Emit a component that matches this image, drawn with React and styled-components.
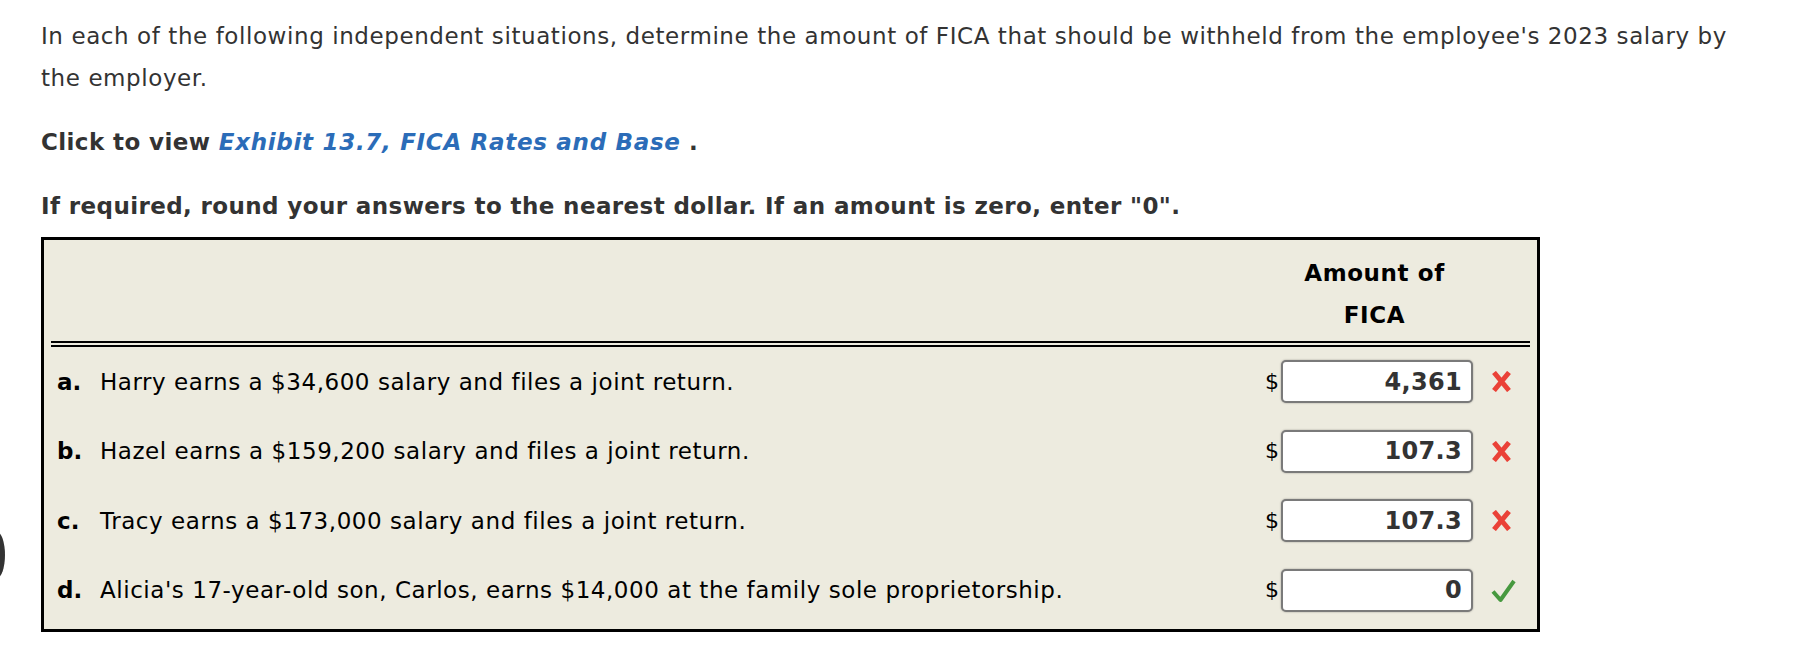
import styled, { createGlobalStyle } from "styled-components";

const GlobalStyle = createGlobalStyle`
  html, body {
    margin: 0;
    padding: 0;
    background: #ffffff;
  }
  body {
    font-family: "DejaVu Sans", Verdana, sans-serif;
  }
`;

const Page = styled.div`
  position: relative;
  padding: 15px 0 40px 41px;
  font-size: 23px;
  letter-spacing: 0.55px;
  line-height: 42px;
  color: #333333;
`;

const Paragraph = styled.p`
  margin: 0 0 22px 0;
  width: ${(p) => p.$width || "auto"};
  font-weight: ${(p) => (p.$bold ? 700 : 400)};
  letter-spacing: ${(p) => (p.$bold ? "0.4px" : "0.58px")};
`;

const ExhibitLink = styled.a`
  color: #2b6cb8;
  font-style: italic;
  font-weight: 700;
  letter-spacing: 0.7px;
  text-decoration: none;
  cursor: pointer;
`;

const Table = styled.div`
  width: 1499px;
  box-sizing: border-box;
  margin-top: -12px;
  border: 3px solid #000000;
  background: #edebdf;
  padding: 0 7px 4px 7px;
  color: #000000;
`;

const Grid = styled.div`
  display: grid;
  grid-template-columns: 1fr 227px 42px;
`;

const HeaderRow = styled.div`
  grid-column: 1 / -1;
  display: grid;
  grid-template-columns: 1fr 227px 42px;
  padding: 12px 0 5px 0;
  border-bottom: 6px double #000000;
`;

const HeaderCell = styled.div`
  grid-column: 2;
  text-align: center;
  font-weight: 700;
  letter-spacing: 0.6px;
  line-height: 42px;
`;

const Row = styled.div`
  grid-column: 1 / -1;
  display: grid;
  grid-template-columns: 1fr 227px 42px;
  align-items: center;
  height: 69.5px;
`;

const Situation = styled.div`
  display: flex;
  align-items: center;
  padding-left: 6px;
  line-height: 30px;
`;

const Letter = styled.span`
  font-weight: 700;
  width: 43px;
  flex-shrink: 0;
  letter-spacing: 0;
`;

const AmountCell = styled.div`
  display: flex;
  align-items: center;
  justify-content: flex-end;
  padding-right: 15px;
`;

const Dollar = styled.span`
  font-size: 22px;
  letter-spacing: 0;
  margin-right: 2px;
  line-height: 30px;
`;

const AmountBox = styled.div`
  width: 192px;
  height: 43px;
  box-sizing: border-box;
  background: #ffffff;
  border: 2px solid #7a7a7a;
  border-radius: 5px;
  box-shadow: 0 0 2px rgba(0, 0, 0, 0.35);
  display: flex;
  align-items: center;
  justify-content: flex-end;
  padding-right: 9px;
  font-size: 24px;
  letter-spacing: 0.3px;
  font-weight: 700;
  color: #333333;
`;

const Mark = styled.div`
  display: flex;
  align-items: center;
  padding-left: 3px;
`;

const SideKnob = styled.div`
  position: absolute;
  left: -11px;
  top: 532px;
  width: 16px;
  height: 46px;
  border-radius: 50%;
  background: #333333;
`;

const WrongIcon = () => (
  <svg width="21" height="21" viewBox="0 0 21 21">
    <path d="M3 1.5 L18 19.5 M18 1.5 L3 19.5" stroke="#ea4137" strokeWidth="5" strokeLinecap="butt" />
  </svg>
);

const RightIcon = () => (
  <svg width="25" height="25" viewBox="0 0 25 25">
    <path d="M2 13.5 L9.5 22 L23 3" stroke="#47993f" strokeWidth="4" fill="none" strokeLinejoin="round" />
  </svg>
);

const rows = [
  { letter: "a.", text: "Harry earns a $34,600 salary and files a joint return.", value: "4,361", correct: false },
  { letter: "b.", text: "Hazel earns a $159,200 salary and files a joint return.", value: "107.3", correct: false },
  { letter: "c.", text: "Tracy earns a $173,000 salary and files a joint return.", value: "107.3", correct: false },
  { letter: "d.", text: "Alicia's 17-year-old son, Carlos, earns $14,000 at the family sole proprietorship.", value: "0", correct: true },
];

export default function App() {
  return (
    <>
      <GlobalStyle />
      <Page>
        <SideKnob />
        <Paragraph $width="1705px">
          In each of the following independent situations, determine the amount of FICA that should be withheld from the employee's 2023 salary by the employer.
        </Paragraph>
        <Paragraph $bold>
          Click to view <ExhibitLink>Exhibit 13.7, FICA Rates and Base</ExhibitLink> .
        </Paragraph>
        <Paragraph $bold>
          If required, round your answers to the nearest dollar. If an amount is zero, enter "0".
        </Paragraph>
        <Table>
          <Grid>
            <HeaderRow>
              <HeaderCell>
                Amount of
                <br />
                FICA
              </HeaderCell>
            </HeaderRow>
            {rows.map((r) => (
              <Row key={r.letter}>
                <Situation>
                  <Letter>{r.letter}</Letter>
                  <span>{r.text}</span>
                </Situation>
                <AmountCell>
                  <Dollar>$</Dollar>
                  <AmountBox>{r.value}</AmountBox>
                </AmountCell>
                <Mark>{r.correct ? <RightIcon /> : <WrongIcon />}</Mark>
              </Row>
            ))}
          </Grid>
        </Table>
      </Page>
    </>
  );
}
